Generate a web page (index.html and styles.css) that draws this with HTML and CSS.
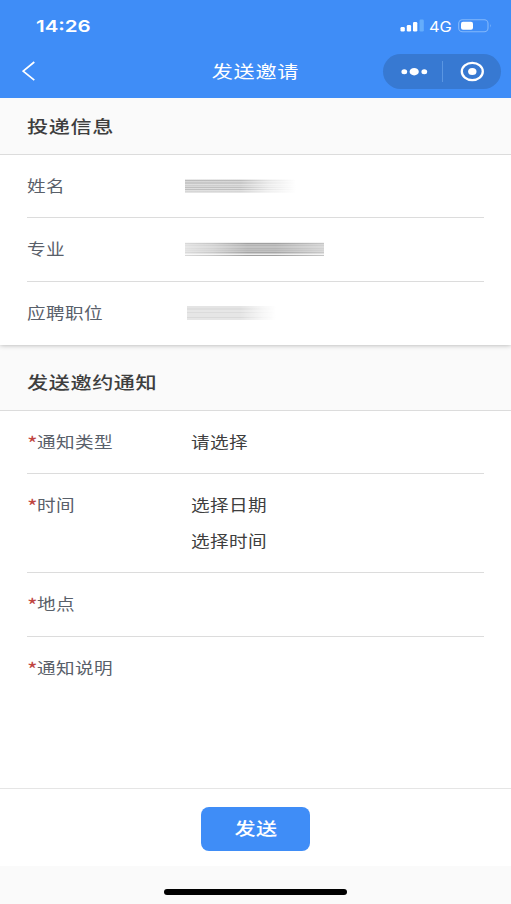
FILE: index.html
```html
<!DOCTYPE html>
<html lang="zh-CN">
<head>
<meta charset="utf-8">
<title>发送邀请</title>
<link rel="stylesheet" href="styles.css">
</head>
<body>
<div class="app">
  <header class="header">
    <div class="status">
      <span class="clock">14:26</span>
      <div class="status-right">
        <svg class="signal" width="24" height="13" viewBox="0 0 24 13" fill="#fff"><rect x="0.5" y="8" width="4.3" height="4.5" rx="1.2"/><rect x="6.8" y="6" width="4.3" height="6.500" rx="1.200"/><rect x="13" y="3" width="4.300" height="9.500" rx="1.200"/><rect x="19.500" y="0.500" width="4.300" height="12" rx="1.200" fill="#65adfb"/></svg>
        <span class="network">4G</span>
        <svg class="battery" width="34" height="14" viewBox="0 0 34 14"><rect x="0.700" y="0.700" width="29.300" height="12" rx="3.800" fill="none" stroke="#83b8fb" stroke-width="1.100"/><rect x="3" y="2.800" width="12" height="8" rx="2" fill="#fff"/><path d="M32 5q1.500 1.700 0 3.600z" fill="#83b8fb"/></svg>
      </div>
    </div>
    <nav class="nav">
      <svg class="back" width="14" height="20" viewBox="0 0 14 20"><path d="M12.300 1L1.200 10.200l11.100 9" fill="none" stroke="#fff" stroke-width="1.700"/></svg>
      <h1 class="nav-title"><span class="wide center">发送邀请</span></h1>
      <div class="capsule">
        <svg width="118" height="35" viewBox="0 0 118 35" fill="#fff"><ellipse cx="21.300" cy="17.700" rx="2.900" ry="2.500"/><ellipse cx="31.200" cy="17.700" rx="4.600" ry="3.700"/><ellipse cx="41.300" cy="17.700" rx="2.900" ry="2.500"/><path d="M59.500 7v21" stroke="#5a96e2"/><ellipse cx="89.300" cy="17.500" rx="10.500" ry="8.600" fill="none" stroke="#fff" stroke-width="2.300"/><ellipse cx="89.300" cy="17.500" rx="4.200" ry="3.600"/></svg>
      </div>
    </nav>
  </header>
  <main class="main">
    <h2 class="section-title"><span class="wide">投递信息</span></h2>
    <section class="card raised">
      <div class="row"><div class="label"><span class="wide">姓名</span></div><div class="masked masked-name"></div></div>
      <div class="row tall"><div class="label"><span class="wide">专业</span></div><div class="masked masked-major"></div></div>
      <div class="row"><div class="label"><span class="wide">应聘职位</span></div><div class="masked masked-job"></div></div>
    </section>
    <h2 class="section-title second"><span class="wide">发送邀约通知</span></h2>
    <section class="card form">
      <div class="row"><div class="label"><span class="wide"><i>*</i>通知类型</span></div><div class="value"><span class="wide">请选择</span></div></div>
      <div class="row time"><div class="label"><span class="wide"><i>*</i>时间</span></div><div class="value"><div><span class="wide">选择日期</span></div><div><span class="wide">选择时间</span></div></div></div>
      <div class="row tall"><div class="label"><span class="wide"><i>*</i>地点</span></div></div>
      <div class="row"><div class="label"><span class="wide"><i>*</i>通知说明</span></div></div>
    </section>
  </main>
  <footer class="footer"><button class="send"><span class="wide center">发送</span></button></footer>
  <div class="home"><div class="home-bar"></div></div>
</div>
</body>
</html>
```
FILE: styles.css
```css
* { box-sizing: border-box; }
body {
  margin: 0;
  background: #fafafa;
  color: #3e3e3e;
  font-family: "Noto Sans CJK SC", sans-serif;
}
h1, h2 { margin: 0; font-weight: 500; }
svg { display: block; }
.app { display: flex; flex-direction: column; width: 511px; height: 904px; overflow: hidden; }

/* type is set on a horizontally expanded scale */
.wide { display: inline-block; white-space: nowrap; transform: scaleX(1.2); transform-origin: left center; }
.center { transform-origin: center; }

.header { height: 98px; background: #3f8df7; color: #fff; flex: none; }
.status { display: flex; justify-content: space-between; height: 50px; padding: 0 19px 0 36px; }
.clock {
  font: 600 16.500px/52px Inter, sans-serif;
  transform: scaleX(1.24);
  transform-origin: left center;
}
.status-right { display: flex; align-items: flex-start; }
.signal { margin: 19px -1px 0 1px; }
.network {
  width: 35px;
  padding-left: 6px;
  font: 400 14px/53px Inter, sans-serif;
  transform: scaleX(1.17);
  transform-origin: 6px center;
}
.battery { margin-top: 19px; }
.nav { display: grid; grid-template-columns: 128px 1fr 128px; height: 48px; }
.back { margin: 11px 0 0 22px; }
.nav-title { font-size: 17.600px; letter-spacing: .6px; line-height: 41px; text-align: center; font-weight: 400; }
.capsule { width: 118px; height: 35px; margin-top: 4px; border-radius: 18px; background: #3779d2; }

.main { flex: 1; background: #fff; }
.section-title {
  height: 57px;
  padding-left: 27px;
  border-bottom: 1px solid #dcdcdc;
  background: #fafafa;
  font-size: 17.600px;
  letter-spacing: .5px;
  line-height: 55px;
}
.second { height: 66px; line-height: 73px; }
.card { padding: 0 27px; background: #fff; }
.raised { position: relative; height: 190px; box-shadow: 0 0 5px rgba(0, 0, 0, .32); clip-path: inset(0 0 -10px 0); }
.row {
  display: flex;
  height: 63px;
  border-bottom: 1px solid #dcdcdc;
  font-size: 15.500px;
  letter-spacing: .33px;
  line-height: 60px;
}
.row:last-child { border-bottom: 0; }
.tall { height: 64px; line-height: 61px; }
.label { width: 158px; color: #59606a; }
.label i { display: inline-block; width: 8.300px; color: #c0443f; font-size: 19px; line-height: 20px; font-style: normal; vertical-align: -3px; letter-spacing: 0; }
.form .label { width: 164px; }
.time { height: 99px; line-height: 36px; padding-top: 12px; }
.masked { height: 14px; margin-top: 24px; }
.masked-name {
  width: 111px;
  background:
    linear-gradient(90deg, rgba(255, 255, 255, .1) 50%, rgba(255, 255, 255, .65) 75%, #fff),
    linear-gradient(#e6e6e6 0 1px, #b4b4b4 1px 2px, #d2d2d2 2px 3px, #c2c2c2 3px 5px, #dadada 5px 6px, #c8c8c8 6px 7px, #d4d4d4 7px 8px, #b9b9b9 8px 9px, #dadada 9px 10px, #b8b8b8 10px 11px, #dedede 11px 12px, #d2d2d2 12px 13px, #e1e1e1 13px);
}
.masked-major {
  width: 139px;
  background:
    linear-gradient(90deg, rgba(255, 255, 255, .6), rgba(255, 255, 255, .4) 20%, transparent 45% 65%, rgba(255, 255, 255, .4)),
    linear-gradient(#eee 0 1px, #a0a0a0 1px 2px, #c0c0c0 2px 3px, #b4b4b4 3px 4px, #c4c4c4 4px 6px, #b6b6b6 6px 7px, #bfbfbf 7px 8px, #b7b7b7 8px 9px, #c2c2c2 9px 10px, #a6a6a6 10px 11px, #ccc 11px 12px, #ededed 12px 13px, #a0a0a0 13px);
}
.masked-job {
  width: 89px;
  margin-left: 2px;
  background:
    linear-gradient(90deg, transparent 60%, rgba(255, 255, 255, .7) 85%, #fff),
    linear-gradient(#e4e4e4 0 2px, #dedede 2px 4px, #e7e7e7 4px 6px, #dcdcdc 6px 7px, #e6e6e6 7px 11px, #dadada 11px 12px, #e6e6e6 12px);
}

.footer { display: flex; justify-content: center; height: 78px; padding-top: 18px; border-top: 1px solid #e5e5e5; background: #fff; }
.send {
  width: 109px;
  height: 44px;
  padding: 0 0 3px;
  border: 0;
  border-radius: 8px;
  background: #3f8df7;
  color: #fff;
  font: 500 17.600px/41px "Noto Sans CJK SC", sans-serif;
  letter-spacing: .3px;
}
.home { display: flex; justify-content: center; height: 38px; padding-top: 23px; background: #fafafa; }
.home-bar { width: 183px; height: 6px; border-radius: 3px; background: #000; }
```
